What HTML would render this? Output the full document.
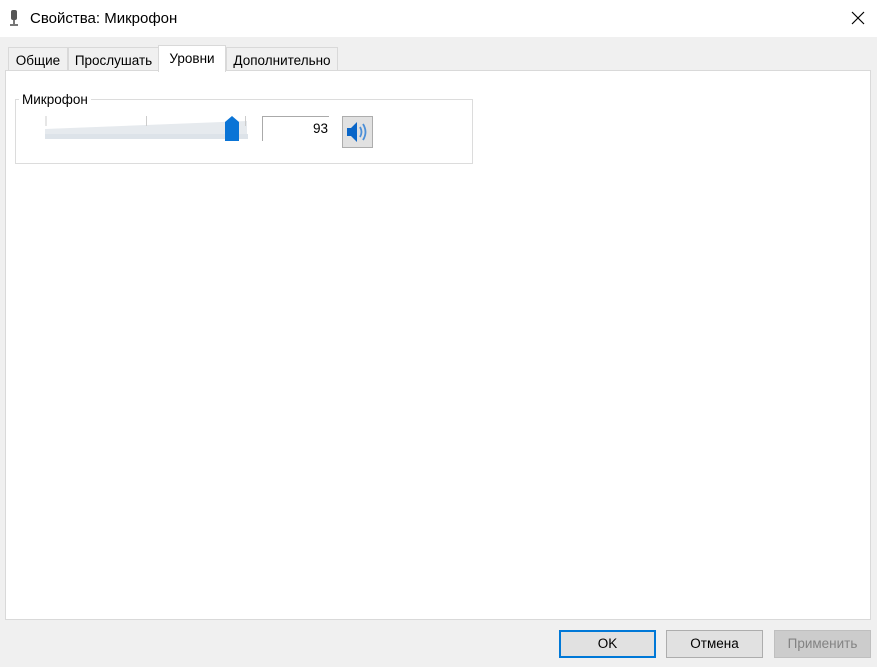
<!DOCTYPE html><html><head><meta charset="utf-8"><style>
body{margin:0;width:877px;height:667px;background:#f0f0f0;font-family:"Liberation Sans",sans-serif;font-size:13px;position:relative;overflow:hidden;color:#000}
.a{position:absolute}
.tab{position:absolute;top:47px;height:23px;background:#f0f0f0;border:1px solid #d9d9d9;border-bottom:none;box-sizing:border-box;line-height:25px;text-align:center;font-size:13.5px}
.btn{position:absolute;top:630px;height:28px;width:97px;box-sizing:border-box;border:1px solid #adadad;background:#e1e1e1;text-align:center;line-height:26px;font-size:13.5px}
</style></head><body>
<div class="a" style="left:0;top:0;width:877px;height:37px;background:#fff"></div>
<svg class="a" style="left:9px;top:10px" width="10" height="17"><rect x="2" y="0" width="6" height="10" rx="2" fill="#555"/><rect x="4" y="10" width="2" height="4" fill="#777"/><rect x="1" y="14" width="8" height="2" fill="#777"/></svg>
<div class="a" style="left:30px;top:10px;font-size:15px">Свойства: Микрофон</div>
<svg class="a" style="left:851px;top:11px" width="14" height="14"><path d="M1 1L13 13M13 1L1 13" stroke="#000" stroke-width="1.2"/></svg>
<div class="a" style="left:5px;top:70px;width:866px;height:550px;background:#fff;border:1px solid #d9d9d9;box-sizing:border-box"></div>
<div class="tab" style="left:8px;width:60px">Общие</div>
<div class="tab" style="left:68px;width:91px">Прослушать</div>
<div class="tab" style="left:226px;width:112px">Дополнительно</div>
<div class="tab" style="left:158px;top:45px;height:27px;width:68px;background:#fff;line-height:25px">Уровни</div>
<div class="a" style="left:15px;top:99px;width:458px;height:65px;border:1px solid #dcdcdc;box-sizing:border-box"></div>
<div class="a" style="left:19px;top:92px;background:#fff;padding:0 3px;font-size:13.5px">Микрофон</div>
<svg class="a" style="left:45px;top:114px" width="205" height="30">
<path d="M0 15 L202 7 L202 22 L0 22Z" fill="#e6eaee"/>
<rect x="0" y="20" width="203" height="5" fill="#dde3e9"/>
<line x1="1" y1="2" x2="1" y2="12" stroke="#ccc"/><line x1="101.5" y1="2" x2="101.5" y2="12" stroke="#ccc"/><line x1="200.5" y1="2" x2="200.5" y2="12" stroke="#ccc"/>
<path d="M180 8 L187 2 L194 8 L194 27 L180 27Z" fill="#0a74d6"/>
</svg>
<div class="a" style="left:262px;top:116px;width:67px;height:25px;border-left:1px solid #aaa;border-top:1px solid #aaa;box-sizing:border-box;text-align:right;padding-right:1px;line-height:24px;font-size:13.5px">93</div>
<div class="a" style="left:342px;top:116px;width:31px;height:32px;background:#e1e1e1;border:1px solid #adadad;box-sizing:border-box"></div>
<svg class="a" style="left:346px;top:121px" width="24" height="22"><path d="M1 7H5L11 1V21L5 15H1Z" fill="#0a66c8"/><path d="M14 6Q17 11 14 16M17 3Q22 11 17 19" stroke="#4b8fd8" stroke-width="1.8" fill="none"/></svg>
<div class="btn" style="left:559px;border:1px solid #0078d7;box-shadow:inset 0 0 0 1px #0078d7">OK</div>
<div class="btn" style="left:666px">Отмена</div>
<div class="btn" style="left:774px;background:#ccc;border-color:#bfbfbf;color:#838383">Применить</div>
</body></html>
